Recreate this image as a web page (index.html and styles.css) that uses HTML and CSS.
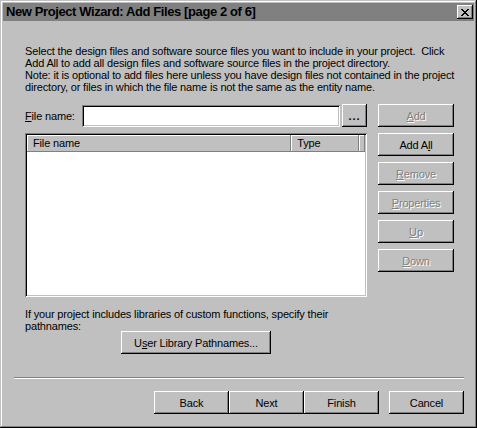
FILE: index.html
```html
<html lang="en">
<head>
  <meta charset="UTF-8">
  <title>New Project Wizard: Add Files</title>
  <link rel="stylesheet" href="styles.css">
</head>
<body>

  <div class="window">
    <div class="titlebar">
      <span class="title">New Project Wizard: Add Files [page 2 of 6]</span>
      <button class="close">
        <svg width="8" height="7" viewBox="0 0 8 7" shape-rendering="crispEdges">
          <path d="M0 0h2v1h-2z M6 0h2v1h-2z M1 1h2v1h-2z M5 1h2v1h-2z M2 2h4v1h-4z M3 3h2v1h-2z M2 4h4v1h-4z M1 5h2v1h-2z M5 5h2v1h-2z M0 6h2v1h-2z M6 6h2v1h-2z" fill="#000"/>
        </svg>
      </button>
    </div>

    <div class="content">
      <p class="intro">
        Select the design files and software source files you want to include in your project.&nbsp; Click<br>
        Add All to add all design files and software source files in the project directory.<br>
        Note: it is optional to add files here unless you have design files not contained in the project<br>
        directory, or files in which the file name is not the same as the entity name.
      </p>

      <div class="main">
        <div class="left">
          <div class="file-row">
            <label class="label"><u>F</u>ile name:</label>
            <input class="field" type="text">
            <button class="btn browse">...</button>
          </div>
          <div class="list">
            <div class="list-header">
              <span class="col col-name">File name</span>
              <span class="col col-type">Type</span>
              <span class="col col-rest"></span>
            </div>
          </div>
        </div>

        <div class="side-buttons">
          <button class="btn disabled"><u>A</u>dd</button>
          <button class="btn">Add A<u>l</u>l</button>
          <button class="btn disabled"><u>R</u>emove</button>
          <button class="btn disabled"><u>P</u>roperties</button>
          <button class="btn disabled"><u>U</u>p</button>
          <button class="btn disabled"><u>D</u>own</button>
        </div>
      </div>

      <p class="lib-text">
        If your project includes libraries of custom functions, specify their<br>
        pathnames:
      </p>
      <button class="btn lib">U<u>s</u>er Library Pathnames...</button>

      <div class="separator"></div>

      <div class="footer">
        <button class="btn">Back</button>
        <button class="btn">Next</button>
        <button class="btn">Finish</button>
        <button class="btn cancel">Cancel</button>
      </div>
    </div>
  </div>

</body>
</html>
```

FILE: styles.css
```css
body {
  margin: 0;
  background: #c0c0c0;
  font-family: 'Liberation Sans', Arial, sans-serif;
  font-size: 11px;
  letter-spacing: -0.16px;
  color: #000;
}

/* Janela estilo Windows 95 */
.window {
  width: 477px;
  height: 428px;
  box-sizing: border-box;
  padding: 3px;
  background: #c0c0c0;
  box-shadow: inset -1px -1px #000, inset 1px 1px #c0c0c0, inset -2px -2px #808080, inset 2px 2px #fff;
}

.titlebar {
  height: 18px;
  background: #808080;
  display: flex;
  align-items: center;
  justify-content: space-between;
  padding: 0 1px 0 3px;
}

.title {
  font-weight: bold;
  font-size: 13px;
  letter-spacing: -0.4px;
  line-height: 18px;
}

.close {
  width: 16px;
  height: 14px;
  padding: 0;
  border: none;
  background: #c0c0c0;
  display: flex;
  align-items: center;
  justify-content: center;
  box-shadow: inset -1px -1px #000, inset 1px 1px #fff, inset -2px -2px #808080;
}

.content {
  padding: 24px 0 0 22px;
}

.intro {
  margin: 0;
  line-height: 12px;
  white-space: nowrap;
}

.main {
  display: flex;
  gap: 11px;
  margin-top: 11px;
}

.left {
  width: 342px;
  display: flex;
  flex-direction: column;
  gap: 6px;
}

.file-row {
  display: flex;
  align-items: flex-end;
  height: 23px;
}

.label {
  width: 57px;
  align-self: center;
  margin-top: 1px;
}

.field {
  width: 259px;
  height: 22px;
  box-sizing: border-box;
  border: none;
  margin: 0 2px 0 0;
  background: #fff;
  box-shadow: inset 1px 1px #808080, inset -1px -1px #fff, inset 2px 2px #000, inset -2px -2px #c0c0c0;
}

.list {
  height: 164px;
  box-sizing: border-box;
  padding: 2px;
  background: #fff;
  box-shadow: inset 1px 1px #808080, inset -1px -1px #fff, inset 2px 2px #000, inset -2px -2px #c0c0c0;
}

.list-header {
  display: flex;
  height: 17px;
}

.col {
  box-sizing: border-box;
  padding-left: 6px;
  line-height: 17px;
  background: #c0c0c0;
  box-shadow: inset -1px -1px #808080, inset 1px 1px #fff;
}

.col-name {
  width: 265px;
}

.col-type {
  width: 68px;
}

.col-rest {
  width: 5px;
}

/* Botoes */
.btn {
  height: 23px;
  padding: 0;
  border: none;
  background: #c0c0c0;
  font-family: 'Liberation Sans', Arial, sans-serif;
  font-size: 11px;
  letter-spacing: -0.16px;
  color: #000;
  box-shadow: inset -1px -1px #000, inset 1px 1px #fff, inset -2px -2px #808080;
}

.btn.disabled {
  color: #808080;
  text-shadow: 1px 1px #fff;
}

.browse {
  width: 25px;
  font-weight: bold;
  letter-spacing: 1px;
}

.side-buttons {
  width: 76px;
  display: flex;
  flex-direction: column;
  gap: 6px;
}

.lib-text {
  margin: 11px 0 0;
  line-height: 12px;
  white-space: nowrap;
}

.lib {
  display: block;
  width: 150px;
  margin: -1px 0 0 96px;
}

.separator {
  width: 450px;
  height: 1px;
  margin: 23px 0 0 -11px;
  background: #808080;
  border-bottom: 1px solid #fff;
}

.footer {
  display: flex;
  margin: 12px 0 0 129px;
}

.footer .btn {
  width: 75px;
}

.footer .cancel {
  margin-left: 10px;
}
```
